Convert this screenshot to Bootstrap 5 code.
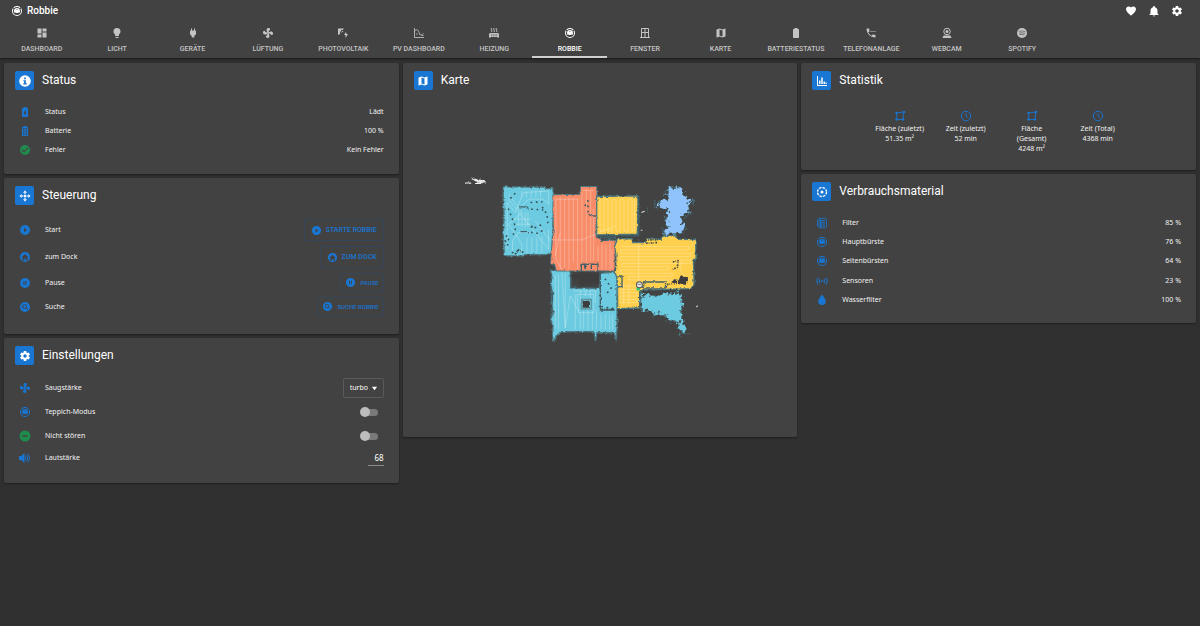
<!DOCTYPE html>
<html lang="de" data-bs-theme="dark">
<head>
<meta charset="utf-8">
<meta name="viewport" content="width=device-width, initial-scale=1">
<title>Robbie</title>
<link href="https://cdn.jsdelivr.net/npm/bootstrap@5.3.0/dist/css/bootstrap.min.css" rel="stylesheet">
<style>
:root{--blue:#1976d2;--green:#1f8b4c;--panel:#424242;--ui:Roboto,sans-serif;--txt:"Noto Sans","Open Sans",sans-serif}
body{background:#303030;color:#f2f2f2;font:7px/10px var(--txt)}
svg{fill:currentColor;display:block;flex:none}
.ic{width:12px;height:12px}
.topbar{background:var(--panel);box-shadow:0 1px 2px rgba(0,0,0,.5);font-family:var(--ui)}
.title-row{height:22px;padding:0 17px 0 11px}
.title-row h1{font-size:10px;line-height:22px;font-weight:500;color:#fff;margin:0}
.title-row button{width:12px;height:12px;padding:0;border:0;background:none;color:#fff}
.tabs{width:88%;margin-left:4px;height:36px}
.tabs a{flex:1 1 0;min-width:0;color:#c4c4c4;text-decoration:none;font-size:7px;line-height:10px;font-weight:500;white-space:nowrap;padding:5px 0 2px;border-bottom:2px solid transparent;gap:5px}
.tabs a.active{color:#fff;border-color:#cfcfcf}
.board{padding:5px 4px}
.panel{background:var(--panel);border:0;border-radius:2px;box-shadow:0 1px 2px rgba(0,0,0,.4);--bs-card-color:#f2f2f2;color:#f2f2f2}
.panel-head{padding:8px 11px 0;gap:8px}
.panel-head h2{font:400 12px/19px var(--ui);color:#fff;margin:0}
.tile{width:19px;height:19px;border-radius:2px;background:var(--blue);color:#fff}
.tile svg{width:12px;height:12px}
.tile .big{width:14px;height:14px}
.rows{display:grid;grid-auto-rows:1fr;margin:0;padding:0 15px}
.item{display:flex;align-items:center;gap:14px}
.item>svg{width:12px;height:12px;color:var(--blue)}
.item>svg.ok{color:var(--green)}
.item .end{margin-left:auto}
.r3{height:58px;margin:12px 0 14px}
.r5{height:97px;margin:12px 0 13px}
.ctl{display:flex;flex-direction:column;gap:5px;padding:0 15px;margin:14px 0 18px}
.act{--bs-btn-color:var(--blue);--bs-btn-border-color:#37475a;--bs-btn-hover-bg:#34475a;--bs-btn-border-radius:2px;font:500 7px/10px var(--ui);display:flex;align-items:center;justify-content:center;gap:4px;padding:0 6px;height:22px}
.act.slim{height:19px;padding:0 4px;font-size:6px}
.act svg{width:11px;height:11px}
.set{padding:0 15px;margin:11px 0 15px}
.set .item{height:24px}
.set .item:last-child{height:20px}
[data-bs-theme=dark] select.form-select{width:41px;height:20px;margin-left:auto;padding:0 0 0 6px;background-color:transparent;border-color:#5a5a5a;border-radius:2px;color:#fff;font:7px/18px var(--txt);background-size:7px 7px;background-position:right 5px center;--bs-form-select-bg-img:url("data:image/svg+xml,%3csvg xmlns='http://www.w3.org/2000/svg' viewBox='0 0 8 8'%3e%3cpath fill='%23fff' d='M1 2h6L4 6z'/%3e%3c/svg%3e")}
.knob{appearance:none;width:18px;height:10px;margin:0 6px 0 auto;display:flex;align-items:center;position:relative}
.knob::before{content:"";width:15px;height:7px;margin-left:3px;border-radius:4px;background:#7a7a7a}
.knob::after{content:"";position:absolute;left:0;top:0;width:10px;height:10px;border-radius:50%;background:#bdbdbd}
.knob:checked::after{left:auto;right:0;background:var(--blue)}
.num{width:16px;height:15px;margin-left:auto;padding:0;border:0;border-bottom:1px solid #8a8a8a;background:none;color:#fff;text-align:right;font:8px/14px var(--txt);border-radius:0}
.stat{flex:0 0 66px;text-align:center}
.stat svg{color:var(--blue);margin:0 auto 2px}
.stats{padding:20px 0 16px}
.mapview{width:100%;height:auto;margin-bottom:7px}
</style>
</head>
<body>
<svg width="0" height="0" class="position-absolute" aria-hidden="true">
<symbol id="vac" viewBox="0 0 24 24"><path d="M12,2C14.65,2 17.19,3.06 19.07,4.93L17.65,6.35C16.15,4.85 14.12,4 12,4C9.88,4 7.84,4.84 6.35,6.35L4.93,4.93C6.81,3.06 9.35,2 12,2M3.66,6.5L5.11,7.94C4.39,9.17 4,10.57 4,12A8,8 0 0,0 12,20A8,8 0 0,0 20,12C20,10.57 19.61,9.17 18.88,7.94L20.34,6.5C21.42,8.12 22,10.04 22,12A10,10 0 0,1 12,22A10,10 0 0,1 2,12C2,10.04 2.58,8.12 3.66,6.5M12,6A6,6 0 0,1 18,12C18,13.59 17.37,15.12 16.24,16.24L14.83,14.83C14.08,15.58 13.06,16 12,16C10.94,16 9.92,15.58 9.17,14.83L7.76,16.24C6.63,15.12 6,13.59 6,12A6,6 0 0,1 12,6M12,8A1,1 0 0,0 11,9A1,1 0 0,0 12,10A1,1 0 0,0 13,9A1,1 0 0,0 12,8Z"/></symbol>
<symbol id="dash" viewBox="0 0 24 24"><path d="M13,3V9H21V3M13,21H21V11H13M3,21H11V15H3M3,13H11V3H3V13Z"/></symbol>
<symbol id="bulb" viewBox="0 0 24 24"><path d="M12,2A7,7 0 0,0 5,9C5,11.38 6.19,13.47 8,14.74V17A1,1 0 0,0 9,18H15A1,1 0 0,0 16,17V14.74C17.81,13.47 19,11.38 19,9A7,7 0 0,0 12,2M9,21A1,1 0 0,0 10,22H14A1,1 0 0,0 15,21V20H9V21Z"/></symbol>
<symbol id="plug" viewBox="0 0 24 24"><path d="M16,7V3H14V7H10V3H8V7C7,7 6,8 6,9V14.5L9.5,18V21H14.5V18L18,14.5V9C18,8 17,7 16,7Z"/></symbol>
<symbol id="fan" viewBox="0 0 24 24"><path d="M12,11A1,1 0 0,0 11,12A1,1 0 0,0 12,13A1,1 0 0,0 13,12A1,1 0 0,0 12,11M12.5,2C17,2 17.11,5.57 14.75,6.75C13.76,7.24 13.32,8.29 13.13,9.22C13.61,9.42 14.03,9.73 14.35,10.13C18.05,8.13 22.03,8.92 22.03,12.5C22.03,17 18.46,17.1 17.28,14.73C16.78,13.74 15.72,13.3 14.79,13.11C14.59,13.59 14.28,14 13.88,14.34C15.87,18.03 15.08,22 11.5,22C7,22 6.91,18.42 9.27,17.24C10.25,16.75 10.69,15.71 10.89,14.79C10.4,14.59 9.97,14.27 9.65,13.87C5.96,15.85 2,15.07 2,11.5C2,7 5.56,6.89 6.74,9.26C7.24,10.25 8.29,10.68 9.22,10.87C9.41,10.39 9.73,9.97 10.14,9.65C8.15,5.96 8.94,2 12.5,2Z"/></symbol>
<symbol id="solar" viewBox="0 0 24 24"><path d="M2 3h12l-2.500 3H8v3H6v5L2 16zM10 8h3l-4 4V10zM18 10l-4 6h3v6l5-8h-3z"/></symbol>
<symbol id="chart" viewBox="0 0 24 24"><path fill="none" stroke="currentColor" stroke-width="1.700" d="M3 2v19h19M3 9c4-6 7-4 9 2s4 6 9 2M6 14h3m3 0h2m3 3h4"/></symbol>
<symbol id="heat" viewBox="0 0 24 24"><path d="M3 12h18v2h1v6h-1v2h-2v-2H5v2H3v-2H2v-6h1z"/><path fill="none" stroke="currentColor" stroke-width="1.800" d="M7 2q-2 2 0 4t0 4M12 2q-2 2 0 4t0 4M17 2q-2 2 0 4t0 4"/><path stroke="#424242" d="M7 14v5M10.500 14v5M14 14v5M17.500 14v5"/></symbol>
<symbol id="win" viewBox="0 0 24 24"><path fill="none" stroke="currentColor" stroke-width="2" d="M5 20V3h14v17M12 3v17M5 11h14M2 21h20"/></symbol>
<symbol id="map" viewBox="0 0 24 24"><path d="M15,19L9,16.89V5L15,7.11M20.5,3C20.44,3 20.39,3 20.34,3L15,5.1L9,3L3.36,4.9C3.15,4.97 3,5.15 3,5.38V20.5A0.5,0.5 0 0,0 3.5,21C3.55,21 3.61,21 3.66,20.97L9,18.9L15,21L20.64,19.1C20.85,19 21,18.85 21,18.62V3.5A0.5,0.5 0 0,0 20.5,3Z"/></symbol>
<symbol id="bat" viewBox="0 0 24 24"><path d="M16.670 4H15V2H9v2H7.330Q6 4 6 5.330V20.670Q6 22 7.330 22h9.340Q18 22 18 20.670V5.330Q18 4 16.670 4z"/></symbol>
<symbol id="batc" viewBox="0 0 24 24"><path fill-rule="evenodd" d="M16.670 4H15V2H9v2H7.330Q6 4 6 5.330V20.670Q6 22 7.330 22h9.340Q18 22 18 20.670V5.330Q18 4 16.670 4zM11 20v-5.500H9L13 7v5.500h2z"/></symbol>
<symbol id="batf" viewBox="0 0 24 24"><path fill-rule="evenodd" d="M16.670 4H15V2H9v2H7.330Q6 4 6 5.330V20.670Q6 22 7.330 22h9.340Q18 22 18 20.670V5.330Q18 4 16.670 4zM8 6.500h3v3H8zm5 0h3v3h-3zM8 11.500h3v3H8zm5 0h3v3h-3zM8 16.500h3v3H8zm5 0h3v3h-3z"/></symbol>
<symbol id="phone" viewBox="0 0 24 24"><path d="M20 15.500c-1.250 0-2.450-.200-3.570-.570a1 1 0 0 0-1.020.240l-2.200 2.200a15 15 0 0 1-6.590-6.580l2.200-2.210c.280-.270.360-.660.250-1.010A11.400 11.400 0 0 1 8.500 4a1 1 0 0 0-1-1H4a1 1 0 0 0-1 1 17 17 0 0 0 17 17 1 1 0 0 0 1-1v-3.500a1 1 0 0 0-1-1M11 8h2v2h-2zM15 8h2v2h-2zM19 8h2v2h-2z"/></symbol>
<symbol id="cam" viewBox="0 0 24 24"><circle cx="12" cy="9" r="6.500" fill="none" stroke="currentColor" stroke-width="2"/><circle cx="12" cy="9" r="3"/><path d="M5 17h14l2 5H3z"/></symbol>
<symbol id="spot" viewBox="0 0 24 24"><circle cx="12" cy="12" r="10"/><path fill="none" stroke="#666" stroke-width="1.700" stroke-linecap="round" d="M6 8.500q7-2 12.500 1M7 12q6-1.500 10.500 1M7.500 15q5-1 8.500 1"/></symbol>
<symbol id="heart" viewBox="0 0 24 24"><path d="M12,21.35L10.55,20.03C5.4,15.36 2,12.27 2,8.5C2,5.41 4.42,3 7.5,3C9.24,3 10.91,3.81 12,5.08C13.09,3.81 14.76,3 16.5,3C19.58,3 22,5.41 22,8.5C22,12.27 18.6,15.36 13.45,20.03L12,21.35Z"/></symbol>
<symbol id="bell" viewBox="0 0 24 24"><path d="M21,19V20H3V19L5,17V11C5,7.9 7.03,5.17 10,4.29C10,4.19 10,4.1 10,4A2,2 0 0,1 12,2A2,2 0 0,1 14,4C14,4.1 14,4.19 14,4.29C16.97,5.17 19,7.9 19,11V17L21,19M14,21A2,2 0 0,1 12,23A2,2 0 0,1 10,21"/></symbol>
<symbol id="cog" viewBox="0 0 24 24"><path d="M12,15.5A3.5,3.5 0 0,1 8.5,12A3.5,3.5 0 0,1 12,8.5A3.5,3.5 0 0,1 15.5,12A3.5,3.5 0 0,1 12,15.5M19.43,12.97C19.47,12.65 19.5,12.33 19.5,12C19.5,11.67 19.47,11.34 19.43,11L21.54,9.37C21.73,9.22 21.78,8.95 21.66,8.73L19.66,5.27C19.54,5.05 19.27,4.96 19.05,5.05L16.56,6.05C16.04,5.66 15.5,5.32 14.87,5.07L14.5,2.42C14.46,2.18 14.25,2 14,2H10C9.75,2 9.54,2.18 9.5,2.42L9.13,5.07C8.5,5.32 7.96,5.66 7.44,6.05L4.95,5.05C4.73,4.96 4.46,5.05 4.34,5.27L2.34,8.73C2.21,8.95 2.27,9.22 2.46,9.37L4.57,11C4.53,11.34 4.5,11.67 4.5,12C4.5,12.33 4.53,12.65 4.57,12.97L2.46,14.63C2.27,14.78 2.21,15.05 2.34,15.27L4.34,18.73C4.46,18.95 4.73,19.03 4.95,18.95L7.44,17.94C7.96,18.34 8.5,18.68 9.13,18.93L9.5,21.58C9.54,21.82 9.75,22 10,22H14C14.25,22 14.46,21.82 14.5,21.58L14.87,18.93C15.5,18.67 16.04,18.34 16.56,17.94L19.05,18.95C19.27,19.03 19.54,18.95 19.66,18.73L21.66,15.27C21.78,15.05 21.73,14.78 21.54,14.63L19.43,12.97Z"/></symbol>
<symbol id="info" viewBox="0 0 24 24"><path fill-rule="evenodd" d="M12 2a10 10 0 1 0 0 20 10 10 0 1 0 0-20zM10.500 6h3v3h-3zM9 10.500h4.500V16H15v2H9v-2h1.500v-3.500H9z"/></symbol>
<symbol id="check" viewBox="0 0 24 24"><path fill-rule="evenodd" d="M12 2a10 10 0 1 0 0 20 10 10 0 1 0 0-20zM10 17l-5-5 1.500-1.500L10 14l7.500-7.500L19 8z"/></symbol>
<symbol id="minus" viewBox="0 0 24 24"><path fill-rule="evenodd" d="M12 1a11 11 0 1 0 0 22 11 11 0 1 0 0-22zM7 10.500h10v3H7z"/></symbol>
<symbol id="play" viewBox="0 0 24 24"><path fill-rule="evenodd" d="M12 2a10 10 0 1 0 0 20 10 10 0 1 0 0-20zM10 7.500v9l6-4.500z"/></symbol>
<symbol id="pause" viewBox="0 0 24 24"><path fill-rule="evenodd" d="M12 2a10 10 0 1 0 0 20 10 10 0 1 0 0-20zM9 8h2v8H9zM13 8h2v8h-2z"/></symbol>
<symbol id="home" viewBox="0 0 24 24"><path fill-rule="evenodd" d="M12 2a10 10 0 1 0 0 20 10 10 0 1 0 0-20zM12 6l7 6.500h-2V19h-3.500v-4h-3v4H7v-6.500H5z"/></symbol>
<symbol id="find" viewBox="0 0 24 24"><circle cx="12" cy="12" r="10"/><path fill="none" stroke="#424242" stroke-width="2" d="M14 14l4 4"/><circle cx="11" cy="11" r="4" fill="none" stroke="#424242" stroke-width="1.800"/></symbol>
<symbol id="move" viewBox="0 0 24 24"><path d="M12 1l4 4.500H8zM12 23l4-4.500H8zM1 12l4.500-4v8zM23 12l-4.500-4v8zM9 12a3 3 0 1 0 6 0 3 3 0 1 0-6 0zM10.500 6h3v1.500h-3zM10.500 16.500h3V18h-3zM6 10.500h1.500v3H6zM16.500 10.500H18v3h-1.500z"/></symbol>
<symbol id="vol" viewBox="0 0 24 24"><path d="M0 8h4l7-6v20l-7-6H0z"/><path fill="none" stroke="currentColor" stroke-width="1.900" d="M13 9q2 3 0 6M15 6q5 6 0 12M17 3q8 9 0 18"/></symbol>
<symbol id="bars" viewBox="0 0 24 24"><path d="M2 2h2v18h18v2H2zM6 11h3v7H6zM10.500 5h3v13h-3zM15 13h3v5h-3zM19 15h2.500v3H19z"/></symbol>
<symbol id="area" viewBox="0 0 24 24"><path fill="none" stroke="currentColor" stroke-width="1.800" d="M5 6L19 4 18 19H6z"/><g><circle cx="5" cy="6" r="2.500"/><circle cx="20" cy="4" r="2.500"/><circle cx="18" cy="19" r="2.500"/><circle cx="5" cy="19" r="2.500"/></g></symbol>
<symbol id="clock" viewBox="0 0 24 24"><circle cx="12" cy="12" r="9.500" fill="none" stroke="currentColor" stroke-width="2"/><path fill="none" stroke="currentColor" stroke-width="1.800" d="M12 6.500V12l4.500 3"/></symbol>
<symbol id="wear" viewBox="0 0 24 24"><circle cx="12" cy="12" r="9" fill="none" stroke="currentColor" stroke-width="2.600" stroke-dasharray="5 2.070"/><circle cx="12" cy="12" r="3"/></symbol>
<symbol id="filt" viewBox="0 0 24 24"><path fill="none" stroke="currentColor" stroke-width="1.700" d="M6 2.500h12q3 0 3 3v13q0 3-3 3H6zM3 5v14M9 7h9M9 10.500h9M9 14h9M9 17.500h9M9 4v17"/></symbol>
<symbol id="sens" viewBox="0 0 24 24"><path fill="none" stroke="currentColor" stroke-width="2" d="M4 5q-5 7 0 14M20 5q5 7 0 14M7.500 8q-2.500 4 0 8M16.500 8q2.500 4 0 8"/><path d="M9 11h6v2.500H9z"/></symbol>
<symbol id="drop" viewBox="0 0 24 24"><path d="M12,22A7.500,7.500 0 0,1 4.500,14.500C4.500,10 12,1 12,1C12,1 19.500,10 19.500,14.500A7.500,7.500 0 0,1 12,22Z"/></symbol>
</svg>

<header class="topbar">
<div class="title-row d-flex align-items-center">
<svg class="ic text-white me-1"><use href="#vac"/></svg><h1>Robbie</h1>
<div class="d-flex ms-auto" style="gap:11px">
<button type="button" aria-label="Favoriten"><svg class="ic"><use href="#heart"/></svg></button>
<button type="button" aria-label="Meldungen"><svg class="ic"><use href="#bell"/></svg></button>
<button type="button" aria-label="Optionen"><svg class="ic"><use href="#cog"/></svg></button>
</div>
</div>
<nav class="tabs d-flex">
<a href="#" class="d-flex flex-column align-items-center"><svg class="ic"><use href="#dash"/></svg>DASHBOARD</a>
<a href="#" class="d-flex flex-column align-items-center"><svg class="ic"><use href="#bulb"/></svg>LICHT</a>
<a href="#" class="d-flex flex-column align-items-center"><svg class="ic"><use href="#plug"/></svg>GERÄTE</a>
<a href="#" class="d-flex flex-column align-items-center"><svg class="ic"><use href="#fan"/></svg>LÜFTUNG</a>
<a href="#" class="d-flex flex-column align-items-center"><svg class="ic"><use href="#solar"/></svg>PHOTOVOLTAIK</a>
<a href="#" class="d-flex flex-column align-items-center"><svg class="ic"><use href="#chart"/></svg>PV DASHBOARD</a>
<a href="#" class="d-flex flex-column align-items-center"><svg class="ic"><use href="#heat"/></svg>HEIZUNG</a>
<a href="#" class="active d-flex flex-column align-items-center" aria-current="page"><svg class="ic"><use href="#vac"/></svg>ROBBIE</a>
<a href="#" class="d-flex flex-column align-items-center"><svg class="ic"><use href="#win"/></svg>FENSTER</a>
<a href="#" class="d-flex flex-column align-items-center"><svg class="ic"><use href="#map"/></svg>KARTE</a>
<a href="#" class="d-flex flex-column align-items-center"><svg class="ic"><use href="#bat"/></svg>BATTERIESTATUS</a>
<a href="#" class="d-flex flex-column align-items-center"><svg class="ic"><use href="#phone"/></svg>TELEFONANLAGE</a>
<a href="#" class="d-flex flex-column align-items-center"><svg class="ic"><use href="#cam"/></svg>WEBCAM</a>
<a href="#" class="d-flex flex-column align-items-center"><svg class="ic"><use href="#spot"/></svg>SPOTIFY</a>
</nav>
</header>

<main class="board container-fluid">
<div class="row row-cols-1 row-cols-md-3 gx-1 mx-0 align-items-start" style="--bs-gutter-x:4px;margin-inline:-2px!important">
<div class="col d-flex flex-column gap-1">
<section class="card panel">
<div class="panel-head d-flex align-items-center"><span class="tile d-flex align-items-center justify-content-center"><svg class="big"><use href="#info"/></svg></span><h2>Status</h2></div>
<ul class="rows r3 list-unstyled">
<li class="item"><svg><use href="#batc"/></svg><span>Status</span><span class="end">Lädt</span></li>
<li class="item"><svg><use href="#batf"/></svg><span>Batterie</span><span class="end">100 %</span></li>
<li class="item"><svg class="ok"><use href="#check"/></svg><span>Fehler</span><span class="end">Kein Fehler</span></li>
</ul>
</section>
<section class="card panel">
<div class="panel-head d-flex align-items-center"><span class="tile d-flex align-items-center justify-content-center"><svg><use href="#move"/></svg></span><h2>Steuerung</h2></div>
<div class="ctl">
<div class="item"><svg><use href="#play"/></svg><span>Start</span><button type="button" class="btn act end"><svg><use href="#play"/></svg>STARTE ROBBIE</button></div>
<div class="item"><svg><use href="#home"/></svg><span>zum Dock</span><button type="button" class="btn act end"><svg><use href="#home"/></svg>ZUM DOCK</button></div>
<div class="item"><svg><use href="#pause"/></svg><span>Pause</span><button type="button" class="btn act slim end"><svg><use href="#pause"/></svg>PAUSE</button></div>
<div class="item"><svg><use href="#find"/></svg><span>Suche</span><button type="button" class="btn act slim end"><svg><use href="#find"/></svg>SUCHE ROBBIE</button></div>
</div>
</section>
<section class="card panel">
<div class="panel-head d-flex align-items-center"><span class="tile d-flex align-items-center justify-content-center"><svg><use href="#cog"/></svg></span><h2>Einstellungen</h2></div>
<form class="set">
<div class="item"><svg><use href="#fan"/></svg><label for="power">Saugstärke</label><select id="power" class="form-select"><option>leise</option><option>standard</option><option selected>turbo</option></select></div>
<div class="item"><svg><use href="#vac"/></svg><label for="carpet">Teppich-Modus</label><input id="carpet" type="checkbox" role="switch" class="knob"></div>
<div class="item"><svg class="ok"><use href="#minus"/></svg><label for="dnd">Nicht stören</label><input id="dnd" type="checkbox" role="switch" class="knob"></div>
<div class="item"><svg><use href="#vol"/></svg><label for="volume">Lautstärke</label><input id="volume" type="text" inputmode="numeric" value="68" class="num"></div>
</form>
</section>
</div>

<div class="col">
<section class="card panel">
<div class="panel-head d-flex align-items-center"><span class="tile d-flex align-items-center justify-content-center"><svg><use href="#map"/></svg></span><h2>Karte</h2></div>
<svg class="mapview" viewBox="403 91 394 339" role="img" aria-label="Wohnungskarte">
<defs>
<filter id="rough" x="-5%" y="-5%" width="110%" height="110%"><feTurbulence type="fractalNoise" baseFrequency=".12" numOctaves="2" seed="4"/><feDisplacementMap in="SourceGraphic" scale="9" xChannelSelector="R" yChannelSelector="G"/></filter>
<filter id="rougher" x="-20%" y="-20%" width="140%" height="140%"><feTurbulence type="fractalNoise" baseFrequency=".1" numOctaves="2" seed="9"/><feDisplacementMap in="SourceGraphic" scale="28" xChannelSelector="R" yChannelSelector="G"/></filter>
</defs>
<g transform="translate(455 170) scale(.33333)" stroke-linejoin="round">
<g stroke="#4f7880" stroke-width="4" filter="url(#rough)">
<path fill="#6ccbe0" d="M145 53L268 54 272 60 292 56 296 80 290 250 272 256 208 256 205 260 148 260 144 200 147 140 144 90z"/>
<path fill="#6ccbe0" d="M286 303L345 303 347 356 432 357 434 312 478 308 485 320 485 480 482 514 477 490 425 490 421 514 415 487 320 487 302 500 300 514 292 514 293 470 287 450 294 425 287 400 293 370 285 345 290 325z"/>
<path fill="#f88c69" stroke-width="3" d="M293 77L374 75 376 52 424 52 426 84 421 198 440 214 480 212 480 305 303 305 298 286 286 284 288 250 294 180z"/>
<path fill="#ffd04e" d="M424 82L548 80 546 195 424 197z"/>
<path fill="#ffd04e" d="M487 209L530 208 532 220 570 220 574 208 617 210 624 200 660 199 664 210 720 211 722 266 714 274 716 345 706 358 630 360 556 362 554 416 487 418 486 330 480 312 482 260 478 230z"/>
</g>
<g stroke="#4f7880" stroke-width="3" filter="url(#rougher)">
<path fill="#6ccbe0" d="M555 380L575 374 600 382 622 370 632 374 676 370 680 382 678 440 686 462 696 486 674 488 668 456 640 452 628 440 606 428 598 440 584 424 560 420 556 398z"/>
<path fill="#90c3fb" d="M638 56L682 56 684 76 700 92 714 90 698 108 704 132 688 136 676 152 690 174 676 193 624 196 636 165 630 150 640 120 608 116 608 96 636 92 640 80 626 74 642 66z"/>
</g>
<g fill="none" stroke="#fff" stroke-opacity=".4" stroke-width="2">
<path d="M156 240V100L180 130 205 70 280 66V105L265 90H220L190 120M160 75L200 130 160 165 185 200 200 225V250M160 90L280 240V180M175 150H225M175 165H225M190 130V170M200 130V172M210 130V172M218 130V172M172 245V215L190 190 225 190M215 250V205M230 250V205M245 250V205M260 250V200M200 85V65M214 85V65M228 85V65M242 85V65M256 85V65M240 155L285 215"/>
<path d="M302 90V270L320 300M315 85V300M328 88V295M341 85V300M354 88V280M367 90V300M380 70V285M393 60V280M406 65V275M415 120V275M428 230V275M440 225V300M452 228V300M464 220V300M470 240V300M290 212H380L480 170M300 90H370M380 64H415M315 190L300 260"/>
<path d="M300 315V475M310 315V480M320 310L330 475M330 310V475L345 380 375 435V480M355 365H425M360 375V480M375 365V400M390 365V380M405 365V385M420 365V400M385 425V480M398 420V480M411 425V480M424 420V480M437 435V480M450 435V480M463 435V480M472 435V480M365 375H415V430H370z"/>
<path d="M434 92V185H446V92H458V185H470V92H482V185H494V92H506V185H518V92H530V185H538V90"/>
<path d="M495 232H700V242H495V252H705V262H495V272H705V282H500V292H640V302H495V312H650V322H520V332H705M495 350H545V360H495V370H545V380H495V390H545V400H495M505 340V405M520 340V405M550 210V340M680 275Q660 300 700 330"/>
</g>
<g fill="none" stroke="#426169" stroke-width="4" filter="url(#rough)">
<path d="M550 82V200H420M422 205H485M435 216L470 209M378 305V285H428V305M390 285V300M408 285V300M347 310V355L365 350M435 312V422H478M485 320H500V352H488M565 338H630V356H565zM553 362V415M192 113H215L220 118M196 187H222M400 135Q405 142 422 140M598 92V118M612 95V114M700 100L716 92 712 110M690 145L702 130M618 175L626 190M480 255V305M290 315L286 350 292 385 287 440"/>
</g>
<path fill="#3d3d3d" filter="url(#rough)" d="M352 312L370 316 375 310 432 312 432 345 415 338 405 346 392 342 384 350 372 345 366 328 353 328zM382 394H404V415H382zM676 316L698 325 690 348 667 340zM666 332L655 330 650 340 664 345z"/>
<path fill="none" stroke="#5b8a92" stroke-width="3" d="M378 390H408V419H378z"/>
<g fill="none" stroke="#36545d" stroke-width="5" stroke-linecap="round" stroke-dasharray="1 15">
<path d="M167 86L184 68M160 120L182 175 175 195M228 100L260 98M262 115L275 135 278 160M260 185L245 192M230 190L228 165 233 180M240 175L262 165M230 120L262 122M154 200L150 225M160 210L156 235M172 250L200 240M398 95V130M390 108V120M450 330L468 355 450 378M440 412L478 418"/>
</g>
<path fill="none" stroke="#3f4a42" stroke-width="5" stroke-dasharray="5 3 2 4" d="M535 215H555M570 213L612 211M572 222L605 220M652 278L668 274 666 294 652 300M180 255L190 242 205 250M438 420H480M355 348L380 352M634 346L650 343"/>
<path fill="none" stroke="#eee" stroke-width="4" filter="url(#rough)" d="M30 42H48M48 27L65 36M60 43H80M66 38H92M68 32L88 36M60 30L82 42"/><path stroke="#ddd" stroke-width="3" d="M558 130L568 126M556 183H561M722 413L727 409"/>
<path stroke="#45616a" stroke-width="2" d="M576 112V130M670 490L705 494M668 498L680 503"/>
<circle cx="549" cy="358" r="6" fill="#32c671"/><circle cx="552" cy="346" r="9" fill="#e5e5e5" stroke="#555" stroke-width="3"/><path stroke="#555" stroke-width="2" d="M546 345H558"/>
</g>
</svg>
</section>
</div>

<div class="col d-flex flex-column gap-1">
<section class="card panel">
<div class="panel-head d-flex align-items-center"><span class="tile d-flex align-items-center justify-content-center"><svg><use href="#bars"/></svg></span><h2>Statistik</h2></div>
<div class="stats d-flex justify-content-center">
<div class="stat"><svg class="ic"><use href="#area"/></svg>Fläche (zuletzt)<br>51.35 m²</div>
<div class="stat"><svg class="ic"><use href="#clock"/></svg>Zeit (zuletzt)<br>52 min</div>
<div class="stat"><svg class="ic"><use href="#area"/></svg>Fläche<br>(Gesamt)<br>4248 m²</div>
<div class="stat"><svg class="ic"><use href="#clock"/></svg>Zeit (Total)<br>4368 min</div>
</div>
</section>
<section class="card panel">
<div class="panel-head d-flex align-items-center"><span class="tile d-flex align-items-center justify-content-center"><svg><use href="#wear"/></svg></span><h2>Verbrauchsmaterial</h2></div>
<ul class="rows r5 list-unstyled">
<li class="item"><svg><use href="#filt"/></svg><span>Filter</span><span class="end">85 %</span></li>
<li class="item"><svg><use href="#vac"/></svg><span>Hauptbürste</span><span class="end">76 %</span></li>
<li class="item"><svg><use href="#vac"/></svg><span>Seitenbürsten</span><span class="end">64 %</span></li>
<li class="item"><svg><use href="#sens"/></svg><span>Sensoren</span><span class="end">23 %</span></li>
<li class="item"><svg><use href="#drop"/></svg><span>Wasserfilter</span><span class="end">100 %</span></li>
</ul>
</section>
</div>
</div>
</main>
<script src="https://cdn.jsdelivr.net/npm/bootstrap@5.3.0/dist/js/bootstrap.bundle.min.js"></script>
</body>
</html>
